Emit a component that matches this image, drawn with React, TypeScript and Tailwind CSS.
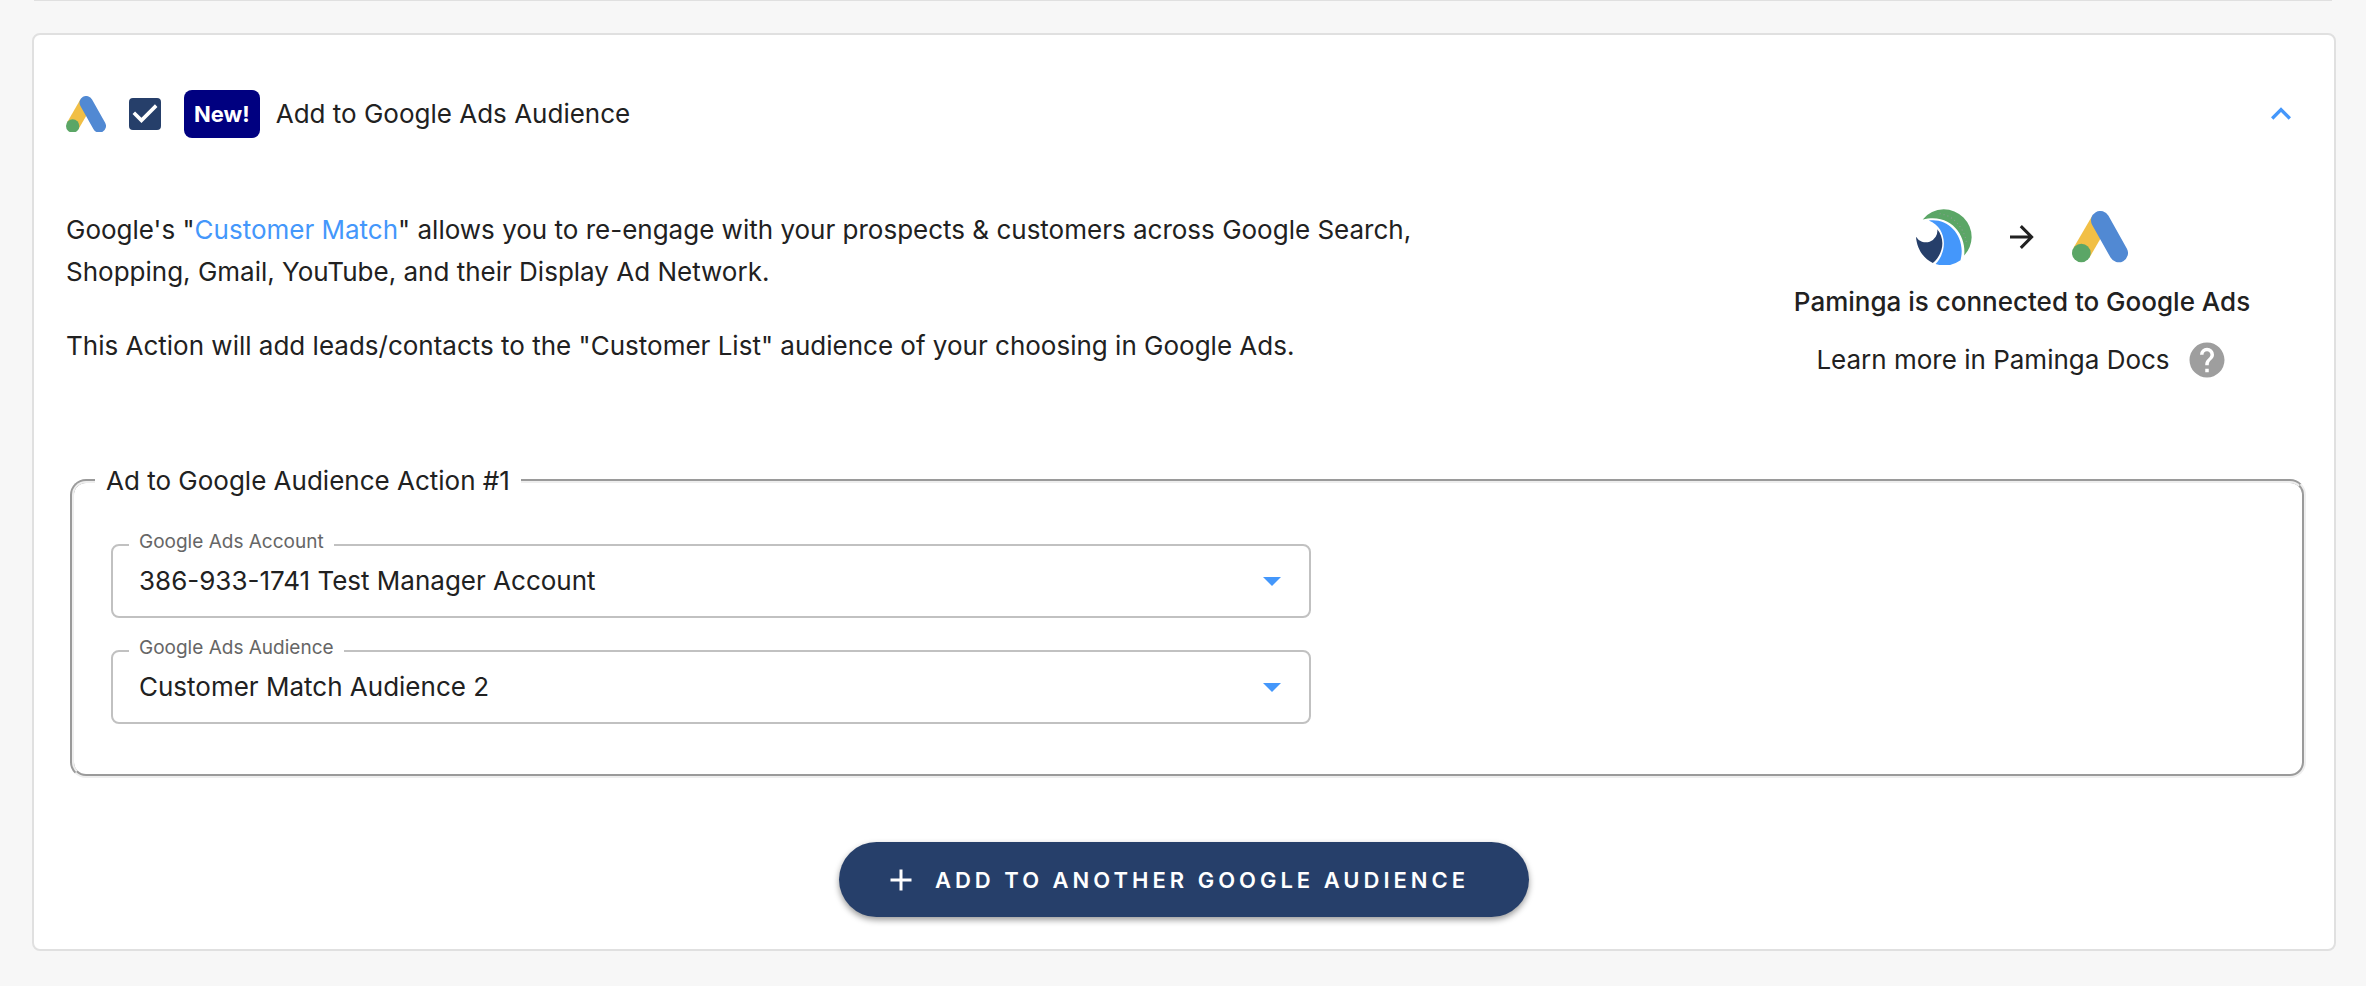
import React, { useState } from 'react';

const GoogleAdsLogo: React.FC<{ className: string }> = ({ className }) => (
    <svg viewBox="0 0 168 154" className={className} aria-hidden="true">
        <path d="M28 126L85 28" stroke="#f1bf45" strokeWidth="56" />
        <path d="M85 28L140 126" stroke="#5189d3" strokeWidth="56" strokeLinecap="round" />
        <circle cx="28" cy="126" r="28" fill="#5ba666" />
    </svg>
);

const PamingaLogo: React.FC<{ className: string }> = ({ className }) => (
    <svg viewBox="0 0 166 168" className={className} aria-hidden="true">
        <path d="M20 31A83 83 0 0 1 82 1A83 83 0 0 1 165 84A83 83 0 0 1 143 138C150 80 105 10 20 31Z" fill="#5ba666" />
        <path d="M70 14C112 18 146 60 150 105" fill="none" stroke="#8d9c94" strokeWidth="3" strokeDasharray="3 9" />
        <path d="M38 34C95 25 150 80 132 152A83 83 0 0 1 58 163C95 125 92 55 38 34Z" fill="#4497fb" />
        <path d="M0 82A34 34 0 0 0 63 60C85 85 85 130 50 160C22 148 2 116 0 82Z" fill="#263f6a" />
    </svg>
);

interface IconProps {
    d: string;
    className: string;
    viewBox?: string;
}

const Icon: React.FC<IconProps> = ({ d, className, viewBox = '0 0 24 24' }) => (
    <svg viewBox={viewBox} className={className} fill="currentColor" aria-hidden="true"><path d={d} /></svg>
);

const icons = {
    check: 'M10 17L5 12L6.41 10.58L10 14.17L17.59 6.58L19 8Z',
    chevronUp: 'M7.41 15.41L12 10.83L16.59 15.41L18 14L12 8L6 14Z',
    arrowRight: 'M4 11V13H16L10.5 18.5L11.92 19.92L19.84 12L11.92 4.08L10.5 5.5L16 11Z',
    plus: 'M19 13H13V19H11V13H5V11H11V5H13V11H19Z',
    help: 'M15.07 11.25L14.17 12.17C13.45 12.89 13 13.5 13 15H11V14.5C11 13.39 11.45 12.39 12.17 11.67L13.41 10.41C13.78 10.05 14 9.55 14 9C14 7.89 13.1 7 12 7A2 2 0 0 0 10 9H8A4 4 0 0 1 12 5A4 4 0 0 1 16 9C16 9.88 15.64 10.67 15.07 11.25M13 19H11V17H13M12 2A10 10 0 0 0 2 12A10 10 0 0 0 12 22A10 10 0 0 0 22 12C22 6.47 17.5 2 12 2Z',
};

interface OutlinedSelectProps {
    id: string;
    label: string;
    options: string[];
}

const OutlinedSelect: React.FC<OutlinedSelectProps> = ({ id, label, options }) => (
    <div className="relative w-full max-w-[1200px]">
        <label htmlFor={id} className="absolute -top-4 left-[18px] bg-white px-[10px] text-[19px] leading-7 text-[#666666]">{label}</label>
        <select id={id} className="block h-[74px] w-full appearance-none rounded-lg border-2 border-[#c1c1c1] bg-white pl-[26px] pr-20 outline-none">
            {options.map(o => <option key={o}>{o}</option>)}
        </select>
        <Icon d="M0 0H18L9 9Z" viewBox="0 0 18 9" className="pointer-events-none absolute right-[30px] top-[33px] h-[9px] w-[18px] text-[#4497fb]" />
    </div>
);

export default function App() {
    const [enabled, setEnabled] = useState(true);
    const [open, setOpen] = useState(true);

    return (
        <div className="min-h-screen bg-[#f7f7f7] px-[30px] pb-8 font-['Inter',sans-serif] text-[26px] leading-[42px] text-[#212121]">
            <div className="mx-1 h-px bg-[#e0e0e0]" />

            <section className="ml-0.5 mt-8 rounded-lg border-2 border-[#e0e0e0] bg-white pb-8 pl-8 pr-7 pt-[55px]">
                <header className="flex h-12 items-center">
                    <GoogleAdsLogo className="w-10" />
                    <span className="relative ml-[23px] size-8">
                        <input
                            id="google-ads"
                            type="checkbox"
                            checked={enabled}
                            onChange={e => setEnabled(e.target.checked)}
                            className="block size-8 appearance-none rounded border-2 border-[#263f6a] checked:bg-[#263f6a]"
                        />
                        {enabled && <Icon d={icons.check} viewBox="3 3 18 18" className="pointer-events-none absolute inset-0 size-8 text-white" />}
                    </span>
                    <label htmlFor="google-ads" className="ml-[23px] flex items-center gap-4">
                        <span className="rounded-lg bg-[#000080] px-[10px] text-[22px] font-bold leading-[48px] text-white">New!</span>
                        Add to Google Ads Audience
                    </label>
                    <button type="button" aria-label="Toggle section" aria-expanded={open} onClick={() => setOpen(!open)} className="ml-auto flex w-[50px] justify-center text-[#4497fb]">
                        <Icon d={icons.chevronUp} className="size-10" />
                    </button>
                </header>

                {open && (
                    <>
                        <div className="mt-[71px] flex justify-between">
                            <div className="w-[64%] space-y-8">
                                <p>
                                    Google's "<a href="#customer-match" className="text-[#4497fb]">Customer Match</a>" allows you to re-engage with your prospects &amp; customers across Google Search, Shopping, Gmail, YouTube, and their Display Ad Network.
                                </p>
                                <p>This Action will add leads/contacts to the "Customer List" audience of your choosing in Google Ads.</p>
                            </div>
                            <div className="flex w-[568px] flex-col items-center gap-4">
                                <div className="flex h-14 items-center gap-8">
                                    <PamingaLogo className="w-14" />
                                    <Icon d={icons.arrowRight} className="size-9" />
                                    <GoogleAdsLogo className="w-14" />
                                </div>
                                <p className="font-medium">Paminga is connected to Google Ads</p>
                                <a href="#docs" className="flex items-center gap-4">
                                    Learn more in Paminga Docs
                                    <Icon d={icons.help} className="size-[42px] text-[#9e9e9e]" />
                                </a>
                            </div>
                        </div>

                        <fieldset className="ml-1 mt-[79px] rounded-2xl border-4 border-[#eeeeee] px-[37px] pb-[50px] [border-style:groove]">
                            <legend className="-ml-4 px-[11px]">Ad to Google Audience Action #1</legend>
                            <div className="flex flex-col gap-8 pt-[42px]">
                                <OutlinedSelect id="ads-account" label="Google Ads Account" options={['386-933-1741 Test Manager Account']} />
                                <OutlinedSelect id="ads-audience" label="Google Ads Audience" options={['Customer Match Audience 2']} />
                            </div>
                        </fieldset>

                        <div className="mt-16 flex justify-center pr-1">
                            <button type="button" className="flex h-[75px] items-center gap-4 rounded-full bg-[#263f6a] pl-11 pr-[60px] text-[22px] font-semibold uppercase tracking-[4px] text-white shadow-[0_3px_6px_rgba(0,0,0,0.4)]">
                                <Icon d={icons.plus} className="size-9" />
                                Add to another Google audience
                            </button>
                        </div>
                    </>
                )}
            </section>
        </div>
    );
}
